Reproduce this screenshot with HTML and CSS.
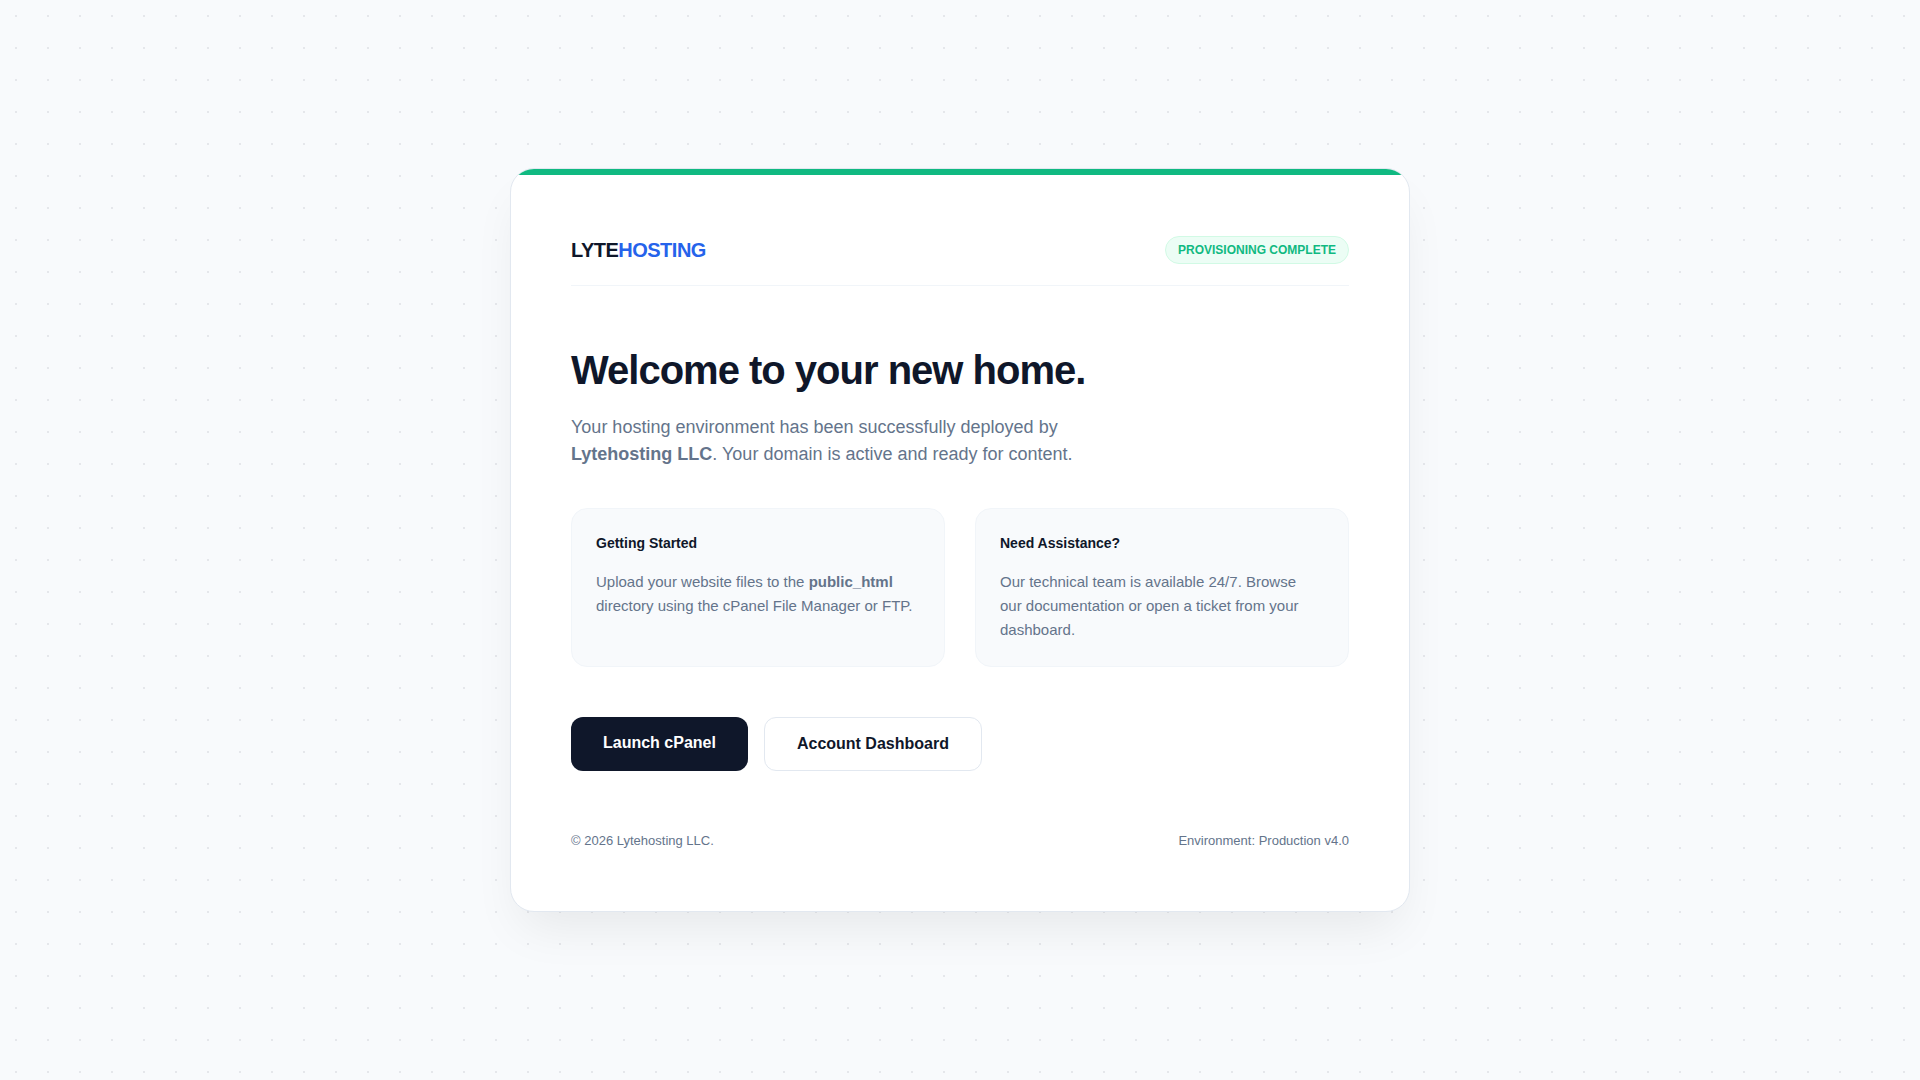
FILE: index.html
```
<!DOCTYPE html>
<html lang="en">
<head>
    <meta charset="UTF-8">
    <meta name="viewport" content="width=device-width, initial-scale=1.0">
    <title>Welcome | Lytehosting LLC</title>
    <link rel="stylesheet" href="styles.css">
</head>
<body>
    <main class="card">
        <div class="card-body">
            <header class="header">
                <div class="logo">LYTE<span>HOSTING</span></div>
                <div class="badge">PROVISIONING COMPLETE</div>
            </header>

            <section class="hero">
                <h1>Welcome to your new home.</h1>
                <p>Your hosting environment has been successfully deployed by <strong>Lytehosting LLC</strong>. Your domain is active and ready for content.</p>
            </section>

            <section class="grid">
                <div class="info-box">
                    <h3>Getting Started</h3>
                    <p>Upload your website files to the <strong>public_html</strong> directory using the cPanel File Manager or FTP.</p>
                </div>
                <div class="info-box">
                    <h3>Need Assistance?</h3>
                    <p>Our technical team is available 24/7. Browse our documentation or open a ticket from your dashboard.</p>
                </div>
            </section>

            <div class="actions">
                <a href="/cpanel" class="btn btn-primary">Launch cPanel</a>
                <a href="#" class="btn btn-outline">Account Dashboard</a>
            </div>

            <footer class="footer">
                <span>&copy; 2026 Lytehosting LLC.</span>
                <span>Environment: Production v4.0</span>
            </footer>
        </div>
    </main>
</body>
</html>
```
FILE: styles.css
```
:root {
    --dark: #0f172a;
    --muted: #64748b;
    --blue: #2563eb;
    --green: #10b981;
    --border: #e2e8f0;
    --bg: #f8fafc;
}
* {
    box-sizing: border-box;
    margin: 0;
    padding: 0;
}
body {
    background-color: var(--bg);
    background-image: radial-gradient(#e5e7eb 1px, transparent 1px);
    background-size: 32px 32px;
    color: var(--dark);
    font-family: "Liberation Sans", Arial, sans-serif;
    font-size: 16px;
    line-height: 1.5;
    min-height: 100vh;
    display: flex;
    align-items: center;
    justify-content: center;
}
.card {
    background: #fff;
    width: 100%;
    max-width: 900px;
    border: 1px solid var(--border);
    border-radius: 24px;
    box-shadow: 0 25px 50px -12px rgba(0, 0, 0, 0.08);
    overflow: hidden;
}
/* green status strip */
.card::before {
    content: "";
    display: block;
    height: 6px;
    background: var(--green);
}
.card-body {
    padding: 60px;
}
.header {
    display: flex;
    justify-content: space-between;
    align-items: center;
    padding-bottom: 20px;
    margin-bottom: 60px;
    border-bottom: 1px solid #f1f5f9;
}
.logo {
    font-size: 20px;
    font-weight: 700;
    letter-spacing: -0.025em;
}
.logo span {
    color: var(--blue);
}
.badge {
    background: #ecfdf5;
    color: var(--green);
    border: 1px solid #d1fae5;
    border-radius: 100px;
    padding: 4px 12px;
    font-size: 12px;
    font-weight: 700;
}
.hero {
    margin-bottom: 40px;
}
.hero h1 {
    font-size: 40px;
    line-height: 48px;
    letter-spacing: -1px;
    margin-bottom: 20px;
}
.hero p {
    color: var(--muted);
    font-size: 18px;
    max-width: 540px;
}
.grid {
    display: grid;
    grid-template-columns: 1fr 1fr;
    gap: 30px;
    margin-bottom: 50px;
}
.info-box {
    background: var(--bg);
    border: 1px solid #f1f5f9;
    border-radius: 16px;
    padding: 24px;
}
.info-box h3 {
    font-size: 14px;
    margin-bottom: 16px;
}
.info-box p {
    color: var(--muted);
    font-size: 15px;
    line-height: 24px;
    max-width: 320px;
}
.actions {
    display: flex;
    flex-wrap: wrap;
    gap: 16px;
}
.btn {
    border-radius: 12px;
    padding: 14px 32px;
    font-weight: 600;
    text-decoration: none;
}
.btn-primary {
    background: var(--dark);
    color: #fff;
}
.btn-outline {
    border: 1px solid var(--border);
    color: var(--dark);
}
.footer {
    display: flex;
    justify-content: space-between;
    margin-top: 60px;
    color: var(--muted);
    font-size: 13px;
}
```
